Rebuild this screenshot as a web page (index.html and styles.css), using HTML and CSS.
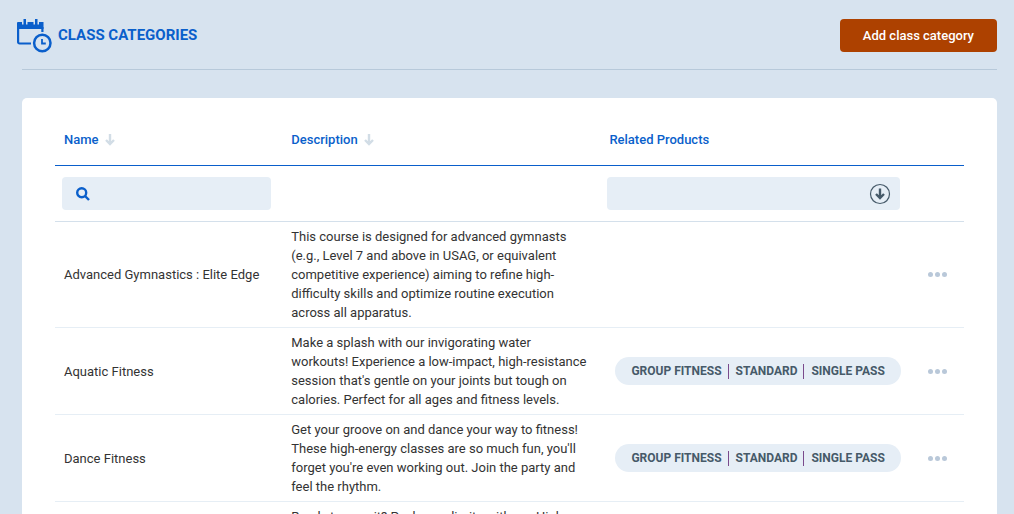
FILE: index.html
```html
<!DOCTYPE html>
<html lang="en">
<head>
    <meta charset="UTF-8">
    <meta name="viewport" content="width=device-width, initial-scale=1.0">
    <title>Class Categories</title>
    <link rel="stylesheet" href="styles.css">
</head>
<body>
    <header class="page-header">
        <h1 class="page-title">
            <svg class="title-icon" viewBox="0 0 36 34" width="36" height="34" aria-hidden="true">
                <path fill="#0a5fcb" d="M1 4a1 1 0 0 1 1-1h4v2.500h1.500V0H10v5.500h1.500V3h6v2.500H19V0h2.500v5.500H23V3h4.500v7H1z"/>
                <path fill="none" stroke="#0a5fcb" stroke-width="2.200" d="M15 24.500H3.500a1.400 1.400 0 0 1-1.400-1.400V8M26.400 8v5"/>
                <circle cx="26.300" cy="24" r="8.200" fill="none" stroke="#0a5fcb" stroke-width="2.500"/>
                <path fill="none" stroke="#0a5fcb" stroke-width="1.800" d="M26 20v4.500h3.800"/>
            </svg>
            Class Categories
        </h1>
        <button class="add-button" type="button">Add class category</button>
    </header>

    <main class="card">
        <table class="categories">
            <colgroup>
                <col class="col-name">
                <col class="col-description">
                <col class="col-products">
                <col class="col-actions">
            </colgroup>
            <thead>
                <tr class="head-row">
                    <th scope="col">
                        <button class="sort" type="button">Name
                            <svg viewBox="0 0 10 12" width="10" height="12" aria-hidden="true"><path d="M5 0v10M1 6l4 4 4-4"/></svg>
                        </button>
                    </th>
                    <th scope="col">
                        <button class="sort" type="button">Description
                            <svg viewBox="0 0 10 12" width="10" height="12" aria-hidden="true"><path d="M5 0v10M1 6l4 4 4-4"/></svg>
                        </button>
                    </th>
                    <th scope="col">Related Products</th>
                    <td></td>
                </tr>
                <tr class="filter-row">
                    <td>
                        <label class="filter">
                            <svg class="search-icon" viewBox="0 0 14 14" width="14" height="14" aria-hidden="true"><circle cx="5.700" cy="5.700" r="4.500"/><path d="M9 9l4 4"/></svg>
                            <input type="text" aria-label="Filter by name">
                        </label>
                    </td>
                    <td></td>
                    <td class="products-filter">
                        <label class="filter">
                            <select aria-label="Filter by related products">
                                <option value=""></option>
                                <option value="1">Group Fitness</option>
                            </select>
                            <svg class="select-icon" viewBox="0 0 22 22" width="22" height="22" aria-hidden="true"><circle cx="11" cy="11" r="9.500"/><path d="M11 5.500v10M7 11l4 4 4-4"/></svg>
                        </label>
                    </td>
                    <td></td>
                </tr>
            </thead>
            <tbody>
                <tr>
                    <td>Advanced Gymnastics : Elite Edge</td>
                    <td class="description">This course is designed for advanced gymnasts (e.g., Level 7 and above in USAG, or equivalent competitive experience) aiming to refine high-difficulty skills and optimize routine execution across all apparatus.</td>
                    <td></td>
                    <td><button class="more" type="button" aria-label="More actions"><i></i><i></i><i></i></button></td>
                </tr>
                <tr>
                    <td>Aquatic Fitness</td>
                    <td class="description">Make a splash with our invigorating water workouts! Experience a low-impact, high-resistance session that's gentle on your joints but tough on calories. Perfect for all ages and fitness levels.</td>
                    <td><div class="pill"><span>Group Fitness</span><span>Standard</span><span>Single Pass</span></div></td>
                    <td><button class="more" type="button" aria-label="More actions"><i></i><i></i><i></i></button></td>
                </tr>
                <tr>
                    <td>Dance Fitness</td>
                    <td class="description">Get your groove on and dance your way to fitness! These high-energy classes are so much fun, you'll forget you're even working out. Join the party and feel the rhythm.</td>
                    <td><div class="pill"><span>Group Fitness</span><span>Standard</span><span>Single Pass</span></div></td>
                    <td><button class="more" type="button" aria-label="More actions"><i></i><i></i><i></i></button></td>
                </tr>
                <tr>
                    <td></td>
                    <td class="description">Ready to amp it? Push your limits with our High-</td>
                    <td></td>
                    <td></td>
                </tr>
            </tbody>
        </table>
    </main>
</body>
</html>
```
FILE: styles.css
```css
* { margin: 0; padding: 0; box-sizing: border-box; }
html { height: 100%; overflow: hidden; }
body {
    height: 100%;
    overflow: hidden;
    padding: 0 17px 0 22px;
    background: #d7e3ef;
    color: #333;
    font-family: Roboto, sans-serif;
    font-size: 13px;
    line-height: 19px;
}
button, input, select { font: inherit; border: none; }
.page-header {
    display: flex;
    align-items: center;
    justify-content: space-between;
    height: 70px;
    padding-top: 2px;
    border-bottom: 1px solid #b7c9da;
    margin-bottom: 28px;
}
.page-title {
    display: flex;
    align-items: center;
    gap: 6px;
    margin-left: -6px;
    color: #0a5fcb;
    font-size: 15px;
    font-weight: 700;
    text-transform: uppercase;
}
.add-button {
    height: 33px;
    padding: 0 23px;
    border-radius: 4px;
    background: #ad4100;
    color: #fff;
    font-weight: 500;
    cursor: pointer;
}
.card {
    padding: 16px 33px;
    border-radius: 5px 5px 0 0;
    background: #fff;
}
.categories {
    width: 100%;
    border-collapse: separate;
    border-spacing: 0;
    table-layout: fixed;
}
.col-name { width: 25%; }
.col-description { width: 35%; }
.col-actions { width: 5%; }
.categories th {
    text-align: left;
    font-weight: 500;
    color: #0a5fcb;
}
.categories th, .categories td {
    padding: 5px 9px;
    border-bottom: 1px solid #e6eef5;
    vertical-align: middle;
}
.categories .description { padding-right: 12px; }
.categories .head-row th, .categories .head-row td { height: 52px; border-bottom-color: #0a5fcb; }
.categories .filter-row td { height: 56px; padding: 0 11px 0 7px; border-bottom-color: #d4e0eb; }
.categories .filter-row .products-filter { padding-right: 19px; }
.sort {
    display: flex;
    align-items: center;
    gap: 6px;
    background: none;
    color: inherit;
    cursor: pointer;
}
.sort svg { fill: none; stroke: #d2dde6; stroke-width: 2.400; }
.filter {
    display: flex;
    align-items: center;
    gap: 8px;
    height: 33px;
    padding: 0 9px 0 14px;
    border-radius: 4px;
    background: #e6eef6;
}
.filter input, .filter select {
    flex: 1;
    min-width: 0;
    height: 100%;
    background: none;
    appearance: none;
    outline: none;
}
.search-icon { fill: none; stroke: #0a5fcb; stroke-width: 2.400; }
.select-icon { fill: none; stroke: #465a69; stroke-width: 1.200; }
.select-icon path { stroke-width: 2.400; }
.pill {
    display: inline-flex;
    align-items: center;
    height: 28px;
    margin-left: 6px;
    padding: 0 16px;
    border-radius: 14px;
    background: #e6eef6;
    color: #465a69;
    font-size: 12px;
    font-weight: 700;
    line-height: 15px;
    text-transform: uppercase;
    white-space: nowrap;
    vertical-align: middle;
}
.pill span + span {
    margin-left: 6px;
    padding-left: 7px;
    border-left: 1px solid #7a4a8c;
}
.more {
    display: flex;
    gap: 2px;
    background: none;
    cursor: pointer;
}
.more i {
    width: 5px;
    height: 5px;
    border-radius: 50%;
    background: #b9c8d9;
}
```
